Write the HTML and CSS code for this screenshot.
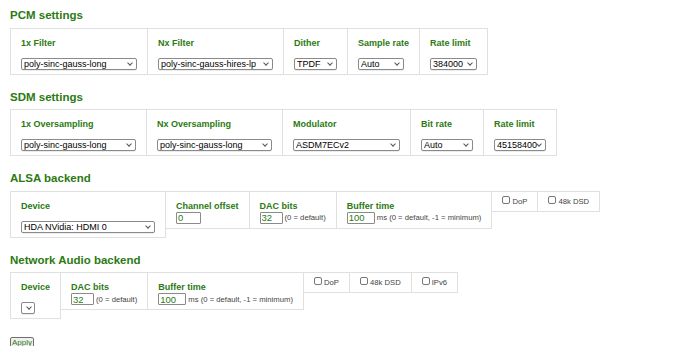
FILE: index.html
```html
<!DOCTYPE html>
<html>
<head>
<meta charset="utf-8">
<title>Settings</title>
<link rel="stylesheet" href="styles.css">
</head>
<body>
<h2 class="sec-title first">PCM settings</h2>
<div class="row">
  <div class="cell"><span class="lbl gap">1x Filter</span><span class="sw"><select class="sel w116"><option>poly-sinc-gauss-long</option></select></span></div>
  <div class="cell"><span class="lbl gap">Nx Filter</span><span class="sw"><select class="sel w115"><option>poly-sinc-gauss-hires-lp</option></select></span></div>
  <div class="cell"><span class="lbl gap">Dither</span><span class="sw"><select class="sel w43"><option>TPDF</option></select></span></div>
  <div class="cell"><span class="lbl gap">Sample rate</span><span class="sw"><select class="sel w46"><option>Auto</option></select></span></div>
  <div class="cell"><span class="lbl gap">Rate limit</span><span class="sw"><select class="sel w47"><option>384000</option></select></span></div>
</div>

<h2 class="sec-title">SDM settings</h2>
<div class="row">
  <div class="cell"><span class="lbl gap">1x Oversampling</span><span class="sw"><select class="sel w115"><option>poly-sinc-gauss-long</option></select></span></div>
  <div class="cell"><span class="lbl gap">Nx Oversampling</span><span class="sw"><select class="sel w115"><option>poly-sinc-gauss-long</option></select></span></div>
  <div class="cell"><span class="lbl gap">Modulator</span><span class="sw"><select class="sel w107"><option>ASDM7ECv2</option></select></span></div>
  <div class="cell"><span class="lbl gap">Bit rate</span><span class="sw"><select class="sel w52"><option>Auto</option></select></span></div>
  <div class="cell"><span class="lbl gap">Rate limit</span><span class="sw"><select class="sel w52"><option>45158400</option></select></span></div>
</div>

<h2 class="sec-title">ALSA backend</h2>
<div class="row">
  <div class="cell"><span class="lbl gap">Device</span><span class="sw"><select class="sel w134"><option>HDA NVidia: HDMI 0</option></select></span></div>
  <div class="cell"><span class="lbl">Channel offset</span><div class="field"><input class="txt i25" type="text" value="0"></div></div>
  <div class="cell"><span class="lbl">DAC bits</span><div class="field"><input class="txt i23" type="text" value="32"><span class="note">(0 = default)</span></div></div>
  <div class="cell"><span class="lbl">Buffer time</span><div class="field"><input class="txt i28" type="text" value="100"><span class="note">ms (0 = default, -1 = minimum)</span></div></div>
  <div class="cell chk-cell"><label class="chk"><input type="checkbox" class="box">DoP</label></div>
  <div class="cell chk-cell"><label class="chk"><input type="checkbox" class="box">48k DSD</label></div>
</div>

<h2 class="sec-title">Network Audio backend</h2>
<div class="row">
  <div class="cell"><span class="lbl gap">Device</span><span class="sw"><select class="sel w14"></select></span></div>
  <div class="cell"><span class="lbl">DAC bits</span><div class="field"><input class="txt i23" type="text" value="32"><span class="note">(0 = default)</span></div></div>
  <div class="cell"><span class="lbl">Buffer time</span><div class="field"><input class="txt i28" type="text" value="100"><span class="note">ms (0 = default, -1 = minimum)</span></div></div>
  <div class="cell chk-cell"><label class="chk"><input type="checkbox" class="box">DoP</label></div>
  <div class="cell chk-cell"><label class="chk"><input type="checkbox" class="box">48k DSD</label></div>
  <div class="cell chk-cell"><label class="chk"><input type="checkbox" class="box">IPv6</label></div>
</div>

<div class="actions"><button class="btn" type="button">Apply</button></div>
</body>
</html>
```

FILE: styles.css
```css
* { box-sizing: border-box; }

body {
  margin: 0;
  padding: 8px 10px;
  background: #ffffff;
  color: #000;
  font-family: "Liberation Sans", Arial, sans-serif;
}

.sec-title {
  font-size: 11.5px;
  line-height: 14px;
  font-weight: bold;
  color: #2b7a12;
  margin: 15px 0 5.5px;
}
.sec-title.first { margin-top: 0; }

.row {
  display: flex;
  align-items: flex-start;
}

.cell {
  border: 1px solid #e0e0e0;
  padding: 9px 10px 4px;
  margin-left: -1px;
}
.cell:first-child { margin-left: 0; }

.chk-cell { padding: 4px 10px; }

.lbl {
  display: block;
  font-size: 9px;
  line-height: 11px;
  font-weight: bold;
  color: #2b7a12;
  white-space: nowrap;
}
.lbl.gap { margin-bottom: 9px; }

.sw {
  position: relative;
  display: block;
  width: max-content;
}
.sw::after {
  content: "";
  position: absolute;
  right: 5px;
  top: 3px;
  width: 3px;
  height: 3px;
  border-right: 1px solid #555;
  border-bottom: 1px solid #555;
  transform: rotate(45deg);
  pointer-events: none;
}
.sw:has(.w14)::after { right: 4.5px; }

.sel {
  display: block;
  appearance: none;
  -webkit-appearance: none;
  height: 12px;
  margin: 0;
  padding: 0 0 0 2px;
  border: 1px solid #8a8a8a;
  border-radius: 2px;
  background: #fff;
  box-shadow: 0 0.5px 0.5px rgba(0,0,0,0.15);
  color: #000;
  font-family: "Liberation Sans", Arial, sans-serif;
  font-size: 9px;
  line-height: 10px;
}
.w14 { width: 14px; }
.w43 { width: 43px; }
.w46 { width: 46px; }
.w47 { width: 47px; }
.w52 { width: 52px; }
.w107 { width: 107px; }
.w115 { width: 115px; }
.w116 { width: 116px; }
.w134 { width: 134px; }

.field {
  display: flex;
  align-items: center;
  gap: 2px;
  white-space: nowrap;
}

.txt {
  height: 12px;
  margin: 0;
  padding: 0 1px;
  border: 1px solid #8a8a8a;
  border-radius: 1px;
  background: #fff;
  color: #2b7a12;
  font-family: "Liberation Sans", Arial, sans-serif;
  font-size: 9.5px;
  line-height: 10px;
}
.i23 { width: 23px; }
.i25 { width: 25px; }
.i28 { width: 28px; }

.note {
  font-size: 7.7px;
  color: #444;
}

.chk {
  display: block;
  font-size: 7.7px;
  line-height: 11px;
  color: #444;
  white-space: nowrap;
}
.box {
  appearance: none;
  -webkit-appearance: none;
  display: inline-block;
  width: 8px;
  height: 8px;
  margin: 0 2px 0 0;
  border: 1px solid #777;
  border-radius: 2px;
  background: #fff;
  vertical-align: baseline;
}

.actions {
  display: flex;
  margin-top: 18px;
}

.btn {
  height: 12px;
  margin: 0;
  padding: 0 1px;
  border: 1px solid #6f6f6f;
  border-radius: 2px;
  background: #efefef;
  color: #2b7a12;
  font-family: "Liberation Sans", Arial, sans-serif;
  font-size: 8px;
  line-height: 10px;
}
```
